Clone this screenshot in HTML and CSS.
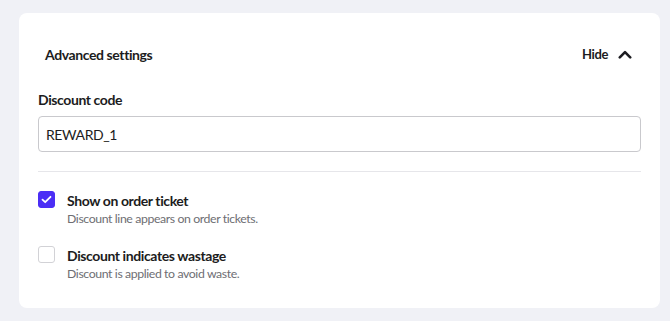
FILE: index.html
```html
<!DOCTYPE html>
<html lang="en">
<head>
    <meta charset="UTF-8">
    <meta name="viewport" content="width=device-width, initial-scale=1.0">
    <title>Advanced settings</title>
    <link rel="stylesheet" href="styles.css">
</head>
<body>

    <div class="card">
        <!-- Section header -->
        <div class="card-header">
            <h3>Advanced settings</h3>
            <button class="toggle">
                Hide
                <svg width="14" height="9" viewBox="0 0 14 9">
                    <path d="M1.8 7.4 L7 2.2 L12.2 7.4" fill="none" stroke="#1c1c21" stroke-width="2.6" stroke-linecap="round" stroke-linejoin="round"/>
                </svg>
            </button>
        </div>

        <!-- Discount code field -->
        <label class="field-label" for="discountCode">Discount code</label>
        <input type="text" id="discountCode" class="text-input" value="REWARD_1">

        <hr class="divider">

        <!-- Options -->
        <div class="option">
            <span class="checkbox checked">
                <svg width="11" height="9" viewBox="0 0 11 9">
                    <path d="M1.5 4.6 L4.2 7.2 L9.5 1.8" fill="none" stroke="#fff" stroke-width="1.8" stroke-linecap="round" stroke-linejoin="round"/>
                </svg>
            </span>
            <div class="option-text">
                <div class="option-title">Show on order ticket</div>
                <div class="option-desc">Discount line appears on order tickets.</div>
            </div>
        </div>

        <div class="option">
            <span class="checkbox"></span>
            <div class="option-text">
                <div class="option-title">Discount indicates wastage</div>
                <div class="option-desc">Discount is applied to avoid waste.</div>
            </div>
        </div>
    </div>

</body>
</html>
```

FILE: styles.css
```css
* {
    margin: 0;
    padding: 0;
    box-sizing: border-box;
}

body {
    font-family: 'Lato', 'Liberation Sans', sans-serif;
    letter-spacing: -0.4px;
    background-color: #f0f1f6;
    color: #1c1c21;
    padding: 13px 10px 13px 19px;
}

.card {
    background-color: white;
    border-radius: 8px;
    padding: 23px 19px 26px;
    width: 641px;
}

.card-header {
    display: flex;
    justify-content: space-between;
    align-items: center;
    height: 36px;
    padding: 0 9px 0 7px;
}

.card-header h3 {
    font-size: 14px;
    font-weight: 700;
}

.toggle {
    display: flex;
    align-items: center;
    gap: 10px;
    background: none;
    border: none;
    font-family: inherit;
    letter-spacing: -0.4px;
    font-size: 13px;
    font-weight: 700;
    color: #1c1c21;
    cursor: pointer;
}

.field-label {
    display: block;
    margin-top: 18px;
    margin-bottom: 6px;
    font-size: 14px;
    line-height: 20px;
    font-weight: 700;
}

.text-input {
    display: block;
    width: 100%;
    height: 36px;
    padding: 0 7px;
    border: 1px solid #c9c9cd;
    border-radius: 4px;
    font-family: inherit;
    letter-spacing: -0.4px;
    font-size: 14px;
    color: #1c1c21;
}

.divider {
    border: none;
    border-top: 1px solid #e6e6ea;
    margin: 19px 0 19px;
}

.option {
    display: flex;
    gap: 12px;
    margin-bottom: 19px;
}

.option:last-child {
    margin-bottom: 0;
}

.checkbox {
    flex: none;
    display: flex;
    align-items: center;
    justify-content: center;
    width: 17px;
    height: 17px;
    border: 1px solid #d2d2d6;
    border-radius: 3px;
}

.checkbox.checked {
    background-color: #4b2ef5;
    border-color: #4b2ef5;
}

.option-title {
    font-size: 14px;
    line-height: 20px;
    font-weight: 700;
}

.option-desc {
    font-size: 12.3px;
    line-height: 16px;
    color: #6e6e73;
}
```
